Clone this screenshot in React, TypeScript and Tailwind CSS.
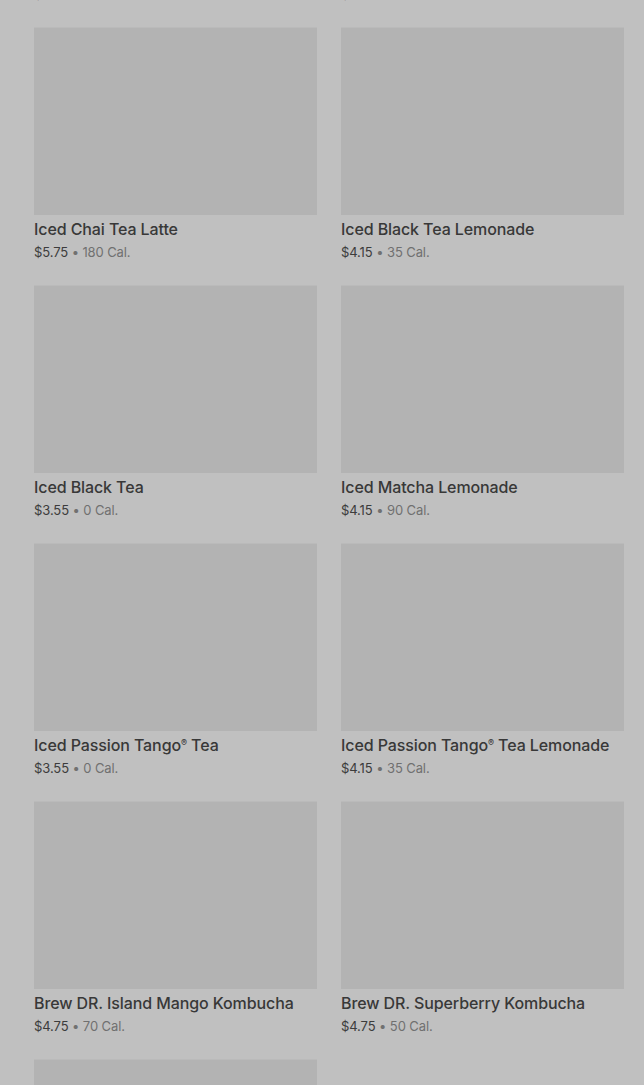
const items = [
  { name: "Iced Shaken Espresso", price: "$4.95", cal: "120 Cal." },
  { name: "Iced Brown Sugar Oatmilk", price: "$5.45", cal: "120 Cal." },
  { name: "Iced Chai Tea Latte", price: "$5.75", cal: "180 Cal." },
  { name: "Iced Black Tea Lemonade", price: "$4.15", cal: "35 Cal." },
  { name: "Iced Black Tea", price: "$3.55", cal: "0 Cal." },
  { name: "Iced Matcha Lemonade", price: "$4.15", cal: "90 Cal." },
  { name: "Iced Passion Tango® Tea", price: "$3.55", cal: "0 Cal." },
  { name: "Iced Passion Tango® Tea Lemonade", price: "$4.15", cal: "35 Cal." },
  { name: "Brew DR. Island Mango Kombucha", price: "$4.75", cal: "70 Cal." },
  { name: "Brew DR. Superberry Kombucha", price: "$4.75", cal: "50 Cal." },
  { name: "Brew DR. Clear Mind Kombucha", price: "$4.75", cal: "30 Cal." },
];

function Name({ name }: { name: string }) {
  const parts = name.split("®");
  if (parts.length === 1) return <>{name}</>;
  return (
    <>
      {parts[0]}
      <span className="text-[9px] align-[5px] leading-none">®</span>
      {parts[1]}
    </>
  );
}

function Card({ name, price, cal }: { name: string; price: string; cal: string }) {
  return (
    <div className="flex flex-col">
      {/* Product image placeholder */}
      <div className="h-[188px] w-full bg-[#b3b3b3] border-t border-[#bababa]" />
      <div className="mt-0.5 text-[16px] leading-[24px] font-medium tracking-[-0.1px] text-[#383838] whitespace-nowrap">
        <Name name={name} />
      </div>
      <div className="mt-px text-[13px] leading-[20px] tracking-[-0.1px] text-[#3c3c3c]">
        {price}
        <span className="text-[#707070]"> • {cal}</span>
      </div>
    </div>
  );
}

export default function App() {
  return (
    <div
      className="h-[1085px] overflow-hidden bg-[#c0c0c0]"
      style={{ fontFamily: "Inter, 'Noto Sans', sans-serif" }}
    >
      <div className="pl-[34px] pr-[20px] mt-[-231px] grid grid-cols-2 gap-x-6 gap-y-[23px]">
        {items.map((item) => (
          <Card key={item.name} {...item} />
        ))}
      </div>
    </div>
  );
}
